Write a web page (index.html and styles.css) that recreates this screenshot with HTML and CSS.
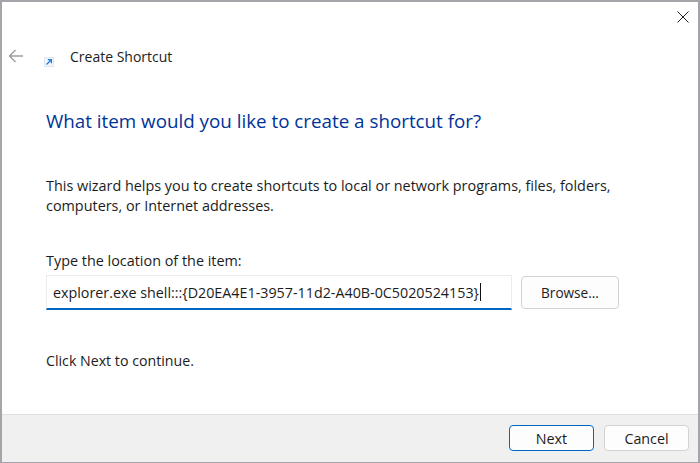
FILE: index.html
```html
<!DOCTYPE html>
<html lang="en">
<head>
<meta charset="utf-8">
<title>Create Shortcut</title>
<link rel="stylesheet" href="styles.css">
</head>
<body>
<div class="window">
  <div class="close-row">
    <svg class="close-icon" width="12" height="12" viewBox="0 0 12 12"><path d="M.5.5l11 11M11.500.5l-11 11" stroke="#222" stroke-width="1" fill="none"/></svg>
  </div>
  <div class="title-row">
    <svg class="back-icon" width="16" height="14" viewBox="0 0 16 14"><path d="M15 7H1.500M7.500 1L1.500 7l6 6" stroke="#9a9a9a" stroke-width="1.300" fill="none"/></svg>
    <svg class="app-icon" width="10" height="10" viewBox="0 0 10 10"><rect x=".5" y=".5" width="9" height="9" fill="#f2f6fb" stroke="#dfe6ee"/><path d="M2.500 7.500L7 3M3.800 2.600H7.400V6.200" stroke="#1f7fd6" stroke-width="1.300" fill="none"/></svg>
    <span class="title">Create Shortcut</span>
  </div>
  <main class="content">
    <h1 class="heading">What item would you like to create a shortcut for?</h1>
    <p class="intro">This wizard helps you to create shortcuts to local or network programs, files, folders,<br>computers, or Internet addresses.</p>
    <label class="label">Type the location of the item:</label>
    <div class="field-row">
      <div class="field"><span class="value">explorer.exe shell:::{D20EA4E1-3957-11d2-A40B-0C5020524153}</span><span class="caret"></span></div>
      <button class="btn browse">Browse...</button>
    </div>
    <p class="hint">Click Next to continue.</p>
  </main>
  <footer class="footer">
    <button class="btn primary">Next</button>
    <button class="btn">Cancel</button>
  </footer>
</div>
</body>
</html>
```
FILE: styles.css
```css
* { box-sizing: border-box; }
html, body { margin: 0; padding: 0; }
body { width: 700px; height: 463px; overflow: hidden; background: #fff; font-family: "Open Sans", "Noto Sans", sans-serif; color: #1c1c1c; }
.window { width: 700px; height: 463px; display: flex; flex-direction: column; border: 1px solid #a3a5a8; border-width: 2px 2px 1px 2px; background: #fff; }
.close-row { height: 14px; margin-top: 9px; display: flex; justify-content: flex-end; padding-right: 9px; flex: none; }
.close-icon { display: block; }
.title-row { display: flex; align-items: center; height: 24px; margin-top: 19px; flex: none; position: relative; }
.back-icon { margin-left: 6px; flex: none; }
.app-icon { margin-left: 20px; margin-top: 11px; flex: none; }
.title { margin-left: 16px; font-size: 14px; }
.content { flex: 1; padding: 0 44px; }
.heading { margin: 41px 0 0; font-size: 18.800px; font-weight: 400; color: #003399; line-height: 24px; white-space: nowrap; }
.intro { margin: 43px 0 0; font-size: 14.400px; line-height: 20px; white-space: nowrap; }
.label { display: block; margin-top: 35px; font-size: 14.400px; line-height: 20px; }
.field-row { display: flex; gap: 9px; margin-top: 4px; align-items: flex-start; }
.field { width: 466px; height: 35px; border: 1px solid #ececec; border-bottom: 2px solid #0067c0; display: flex; align-items: center; padding: 0 0 0 6px; font-size: 14.300px; white-space: nowrap; }
.caret { width: 1px; height: 18px; background: #111; margin-left: 1px; }
.btn { font: inherit; font-size: 14.300px; color: #1c1c1c; width: 85px; height: 26px; padding: 0; background: #fdfdfd; border: 1px solid #d2d2d2; border-radius: 4px; }
.browse { width: 98px; height: 33px; margin-top: 1px; font-size: 13.600px; }
.hint { margin: 41px 0 0; font-size: 14.200px; line-height: 20px; }
.footer { height: 48px; flex: none; background: #f0f0f0; border-top: 1px solid #dfdfdf; display: flex; justify-content: flex-end; align-items: center; gap: 10px; padding-right: 9px; padding-bottom: 1px; }
.primary { border: 1px solid #0067c0; }
```
